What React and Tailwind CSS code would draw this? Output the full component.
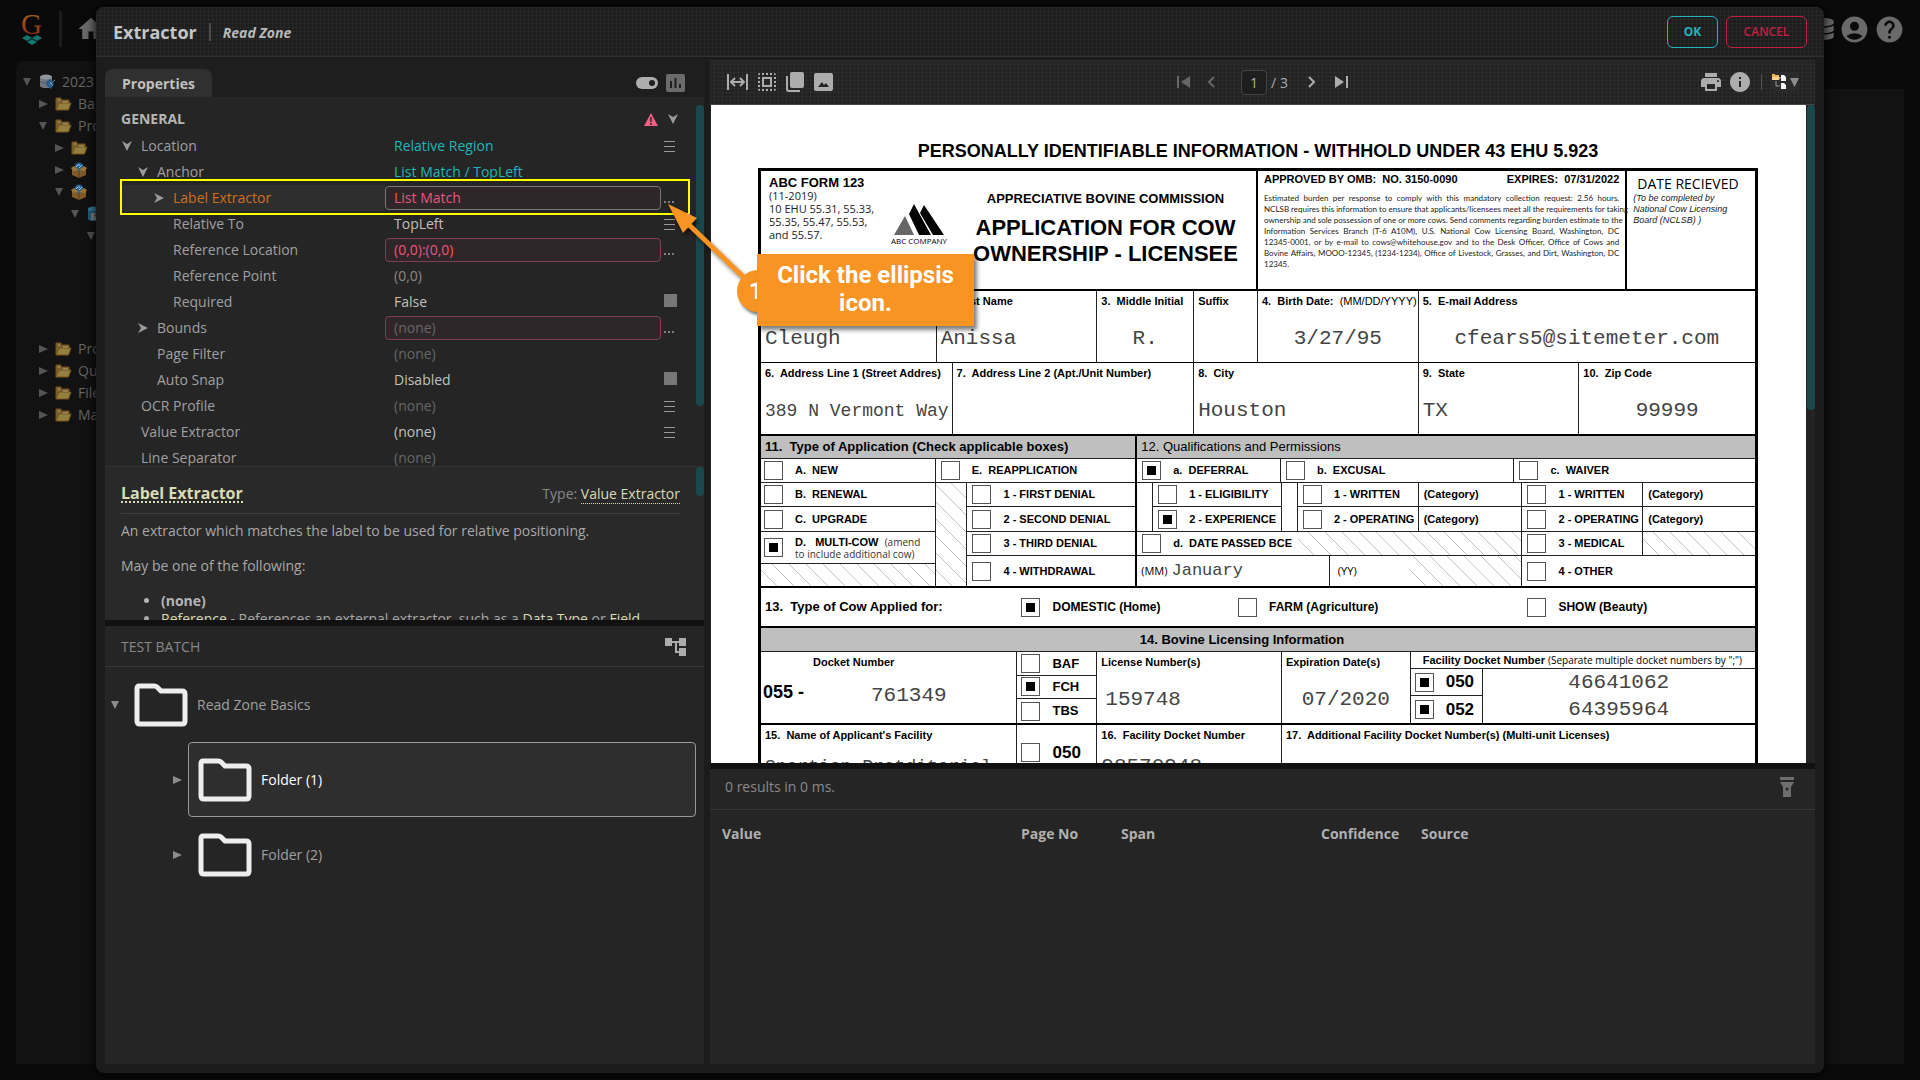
import { useState } from 'react';
import { MdAccountCircle, MdHelp, MdHome, MdPrint, MdInfo, MdSelectAll } from 'react-icons/md';
import { FaDatabase } from 'react-icons/fa';

const tree = [
  { name: '2023', pad: 'pl-[5px]', open: true, icon: 'repo' },
  { name: 'Ba', pad: 'pl-[21px]', open: false, icon: 'folder' },
  { name: 'Pro', pad: 'pl-[21px]', open: true, icon: 'folder' },
  { name: '', pad: 'pl-[37px]', open: false, icon: 'folder' },
  { name: '', pad: 'pl-[37px]', open: false, icon: 'box' },
  { name: '', pad: 'pl-[37px]', open: true, icon: 'box' },
  { name: '', pad: 'pl-[53px]', open: true, icon: 'model' },
  { name: '', pad: 'pl-[69px]', open: true, icon: null },
];

const treeBottom = [
  { name: 'Pro', pad: 'pl-[21px]', open: false, icon: 'folder' },
  { name: 'Qu', pad: 'pl-[21px]', open: false, icon: 'folder' },
  { name: 'File', pad: 'pl-[21px]', open: false, icon: 'folder' },
  { name: 'Ma', pad: 'pl-[21px]', open: false, icon: 'folder' },
];

const properties = [
  { label: 'Location', value: 'Relative Region', pad: 'pl-0', arrow: 'down', color: 'text-[#1fb5bb]', action: 'menu' },
  { label: 'Anchor', value: 'List Match / TopLeft', pad: 'pl-4', arrow: 'down', color: 'text-[#1fb5bb]' },
  { label: 'Label Extractor', value: 'List Match', pad: 'pl-8', arrow: 'right', box: true, selected: true, color: 'text-[#e8577e]', action: 'more' },
  { label: 'Relative To', value: 'TopLeft', pad: 'pl-8', color: 'text-[#c0c0c0]', action: 'menu' },
  { label: 'Reference Location', value: '(0,0):(0,0)', pad: 'pl-8', box: true, color: 'text-[#e8577e]', action: 'more' },
  { label: 'Reference Point', value: '(0,0)', pad: 'pl-8', color: 'text-[#8a8a8a]' },
  { label: 'Required', value: 'False', pad: 'pl-8', color: 'text-[#c0c0c0]', action: 'check' },
  { label: 'Bounds', value: '(none)', pad: 'pl-4', arrow: 'right', box: true, color: 'text-[#666]', action: 'more' },
  { label: 'Page Filter', value: '(none)', pad: 'pl-4', color: 'text-[#666]' },
  { label: 'Auto Snap', value: 'Disabled', pad: 'pl-4', color: 'text-[#c0c0c0]', action: 'check' },
  { label: 'OCR Profile', value: '(none)', pad: 'pl-0', color: 'text-[#666]', action: 'menu' },
  { label: 'Value Extractor', value: '(none)', pad: 'pl-0', color: 'text-[#c0c0c0]', action: 'menu' },
  { label: 'Line Separator', value: '(none)', pad: 'pl-0', color: 'text-[#666]' },
];

const mesh =
  'bg-[linear-gradient(to_right,rgba(255,255,255,0.03)_1px,transparent_1px),linear-gradient(to_bottom,rgba(255,255,255,0.03)_1px,transparent_1px)] bg-[size:4px_4px]';

const Dart = ({ dir }) => (
  <svg width="10" height="10" viewBox="0 0 10 10" className={dir === 'down' ? 'rotate-90' : ''}>
    <path d="M0 0 L10 5 L0 10 L3 5 Z" fill="#9a9a9a" />
  </svg>
);

const Triangle = ({ open, color = '#8c8c8c' }) => (
  <svg width="10" height="10" viewBox="0 0 10 10" className="shrink-0">
    <path d={open ? 'M1 1 H9 L5 9 Z' : 'M1 1 V9 L10 5 Z'} fill={color} />
  </svg>
);

const TreeIcon = ({ name }) => {
  if (name === 'folder') {
    return (
      <svg width="17" height="14" viewBox="0 0 17 14" className="shrink-0">
        <path d="M1 13 V1 H6 V3 H14 V6" fill="#7a6233" stroke="#76511f" />
        <path d="M1 13 L4 6 H16 L13.5 13 Z" fill="#93803f" stroke="#76511f" />
        <path d="M3 3 H5 M8 5 H13" stroke="#b0a36e" />
      </svg>
    );
  }
  if (name === 'box') {
    return (
      <svg width="16" height="16" viewBox="0 0 16 16" className="shrink-0">
        <circle cx="8" cy="5" r="4.5" fill="#23618c" />
        <path d="M5 5 L7 3 M8 6 L11 3 M8 2 V4" stroke="#a9c4d6" />
        <path d="M1 7 L8 9 L15 7 V13 L8 16 L1 13 Z" fill="#80592a" />
        <path d="M0 6 L3 4 L8 8 L13 4 L16 6 L14 9 L8 8 L2 9 Z" fill="#9a7439" />
        <path d="M8 9 V16" stroke="#5b3e19" />
      </svg>
    );
  }
  if (name === 'repo') {
    return (
      <svg width="17" height="16" viewBox="0 0 17 16" className="shrink-0">
        <path d="M1 3 V12 A6 2 0 0 0 13 12 V3 Z" fill="#70767b" />
        <ellipse cx="7" cy="3" rx="6" ry="2.5" fill="#8f979d" />
        <path d="M1 7 A6 2 0 0 0 13 7" fill="none" stroke="#53595d" />
        <path d="M7 8 L11 5 L15 10 L12 15 L8 12 Z" fill="#245b8a" />
        <path d="M10 11 L16 6 M11 8 L14 12" stroke="#6f93b0" />
      </svg>
    );
  }
  return (
    <svg width="16" height="16" viewBox="0 0 16 16" className="shrink-0">
      <path d="M1 3 V13 A6 2 0 0 0 13 13 V3 Z" fill="#255d7d" />
      <ellipse cx="7" cy="3" rx="6" ry="2.5" fill="#397b9c" />
      <path d="M4 7 H14 V14 H4 Z" fill="#7c8a92" />
      <path d="M8 10 L12 6" stroke="#8b2a2a" strokeWidth="2" />
    </svg>
  );
};

const TreeRow = ({ item }) => (
  <div className={`flex h-[22px] items-center gap-[6px] whitespace-nowrap text-sm ${item.pad}`}>
    <span className="flex w-3 justify-center"><Triangle open={item.open} color="#555" /></span>
    {item.icon && <TreeIcon name={item.icon} />}
    <span>{item.name}</span>
  </div>
);

const FolderIcon = () => (
  <svg width="54" height="44" viewBox="0 0 54 44" className="shrink-0">
    <path
      d="M5 3 H20 Q22 3 23 4 L27 8 H48 Q51 8 51 11 V38 Q51 41 48 41 H6 Q3 41 3 38 V6 Q3 3 5 3 Z"
      fill="none"
      stroke="#eee"
      strokeWidth="5"
    />
  </svg>
);

const PropertyAction = ({ row }) => {
  if (row.action === 'menu') {
    return (
      <button aria-label={`${row.label} options`} className="flex flex-col gap-1">
        <span className="h-px w-[11px] bg-[#999]" />
        <span className="h-px w-[11px] bg-[#999]" />
        <span className="h-px w-[11px] bg-[#999]" />
      </button>
    );
  }
  if (row.action === 'more') {
    return (
      <button aria-label={`Edit ${row.label}`} className="flex gap-[2px] pt-2">
        <span className="size-[2px] bg-[#808080]" />
        <span className="size-[2px] bg-[#808080]" />
        <span className="size-[2px] bg-[#808080]" />
      </button>
    );
  }
  if (row.action === 'check') {
    return <input type="checkbox" aria-label={row.label} className="mb-1 size-[13px] appearance-none bg-[#777]" />;
  }
  return null;
};

const PropertyRow = ({ row }) => (
  <div className="flex h-[26px] items-center text-sm">
    <div className={`flex h-full w-[264px] items-center ${row.selected ? 'bg-[#2e2e2e]' : ''} ${row.pad}`}>
      <span className="flex w-5 justify-start pl-px">{row.arrow && <Dart dir={row.arrow} />}</span>
      <span className={row.selected ? 'text-[#cf701f]' : 'text-[#a0a0a0]'}>{row.label}</span>
    </div>
    {row.box ? (
      <input
        aria-label={row.label}
        defaultValue={row.value}
        className={`h-6 w-[276px] rounded border bg-[#2f2629] px-2 pb-[2px] outline-none ${row.selected ? 'border-[#777]' : 'border-[#833e53]'} ${row.color}`}
      />
    ) : (
      <span className={`w-[276px] px-[9px] ${row.color}`}>{row.value}</span>
    )}
    <span className="flex items-center pl-[3px]"><PropertyAction row={row} /></span>
  </div>
);

const Check = ({ label, checked, size = 'text-[11px]', className = '' }) => (
  <label className={`flex items-center gap-3 whitespace-pre font-bold ${size} ${className}`}>
    <input
      type="checkbox"
      defaultChecked={checked}
      className="size-[19px] shrink-0 appearance-none border border-[#555] checked:bg-black checked:shadow-[inset_0_0_0_4px_white]"
    />
    {label}
  </label>
);

const Field = ({ label, value, size = 'text-[21px]', gap = 'mt-4', valueClass = '' }) => (
  <div className="border-r border-[#222] px-1 pt-[2px] last:border-r-0">
    <p className="h-4 whitespace-pre text-[11px] leading-4 font-bold">{label}</p>
    <p className={`font-['Liberation_Mono',monospace] leading-7 whitespace-nowrap text-[#444] ${gap} ${size} ${valueClass}`}>{value}</p>
  </div>
);

const Hatch = ({ className = '' }) => (
  <div className={`bg-[repeating-linear-gradient(45deg,transparent_0_11px,#c4c4c4_11px_12px)] ${className}`} />
);

const FormDocument = () => (
  <div className="min-w-0 flex-1 overflow-hidden bg-white pr-12 pl-[47px] font-['Liberation_Sans',sans-serif] text-black">
    <h2 className="pt-[34px] text-center text-[18px] leading-6 font-bold">
      PERSONALLY IDENTIFIABLE INFORMATION - WITHHOLD UNDER 43 EHU 5.923
    </h2>
    <div className="mt-[5px] border-[3px] border-b-0 border-black">
      <div className="grid h-[120px] grid-cols-[498fr_370fr_128fr] border-b-2 border-black *:min-w-0">
        <div className="flex gap-2 border-r-2 border-black pt-[5px] pl-2">
          <div className="w-[118px] font-['Open_Sans',sans-serif] text-[11px] leading-[13px] whitespace-nowrap text-[#222]">
            <p className="font-['Liberation_Sans',sans-serif] text-[13px] leading-[14px] font-bold text-black">ABC FORM 123</p>
            <p className="leading-3">(11-2019)</p>
            <p>10 EHU 55.31, 55.33,</p>
            <p>55.35, 55.47, 55.53,</p>
            <p>and 55.57.</p>
          </div>
          <div className="flex w-12 flex-col items-center pt-7">
            <svg width="50" height="31" viewBox="0 0 50 31">
              <path d="M0 31 L11 12 L20 31 Z" fill="#666" />
              <path d="M15 10 L20 0 L37 31 H25 Z M26 9 L30 1 L50 31 H39 Z" fill="#000" />
            </svg>
            <p className="mt-px font-['Open_Sans',sans-serif] text-[8px] leading-[10px] whitespace-nowrap">ABC COMPANY</p>
          </div>
          <div className="flex-1 pt-[14px] pl-1 text-center font-bold whitespace-nowrap">
            <p className="text-[13px] leading-[18px]">APPRECIATIVE BOVINE COMMISSION</p>
            <p className="mt-[7px] text-[22px] leading-[26px]">APPLICATION FOR COW<br />OWNERSHIP - LICENSEE</p>
          </div>
        </div>
        <div className="border-r-2 border-black px-[6px] pt-[2px]">
          <div className="flex justify-between text-[11px] leading-[13px] font-bold whitespace-pre">
            <span>APPROVED BY OMB:  NO. 3150-0090</span>
            <span>EXPIRES:  07/31/2022</span>
          </div>
          <div className="mt-[7px] font-['Lato',sans-serif] text-[8px] leading-[11px] whitespace-nowrap text-[#222] [&>p]:[text-align-last:justify]">
            <p>Estimated burden per response to comply with this mandatory collection request: 2.56 hours.</p>
            <p>NCLSB requires this information to ensure that applicants/licensees meet all the requirements for taking</p>
            <p>ownership and sole possession of one or more cows. Send comments regarding burden estimate to the</p>
            <p>Information Services Branch (T-6 A10M), U.S. National Cow Licensing Board, Washington, DC</p>
            <p>12345-0001, or by e-mail to cows@whitehouse.gov and to the Desk Officer, Office of Cows and</p>
            <p>Bovine Affairs, MOOO-12345, (1234-1234), Office of Livestock, Grasses, and Dirt, Washington, DC</p>
            <div>12345.</div>
          </div>
        </div>
        <div className="pt-1 pl-[6px] whitespace-nowrap">
          <p className="pl-1 font-['Open_Sans',sans-serif] text-[14px] leading-[18px]">DATE RECIEVED</p>
          <p className="text-[9px] leading-[11px] text-[#222] italic">(To be completed by<br />National Cow Licensing<br />Board (NCLSB) )</p>
        </div>
      </div>

      <div className="grid h-[72px] grid-cols-[176fr_161fr_97fr_64fr_161fr_337fr] border-b border-black *:min-w-0">
        <Field label="1.  Last Name" value="Cleugh" />
        <Field label="2.  First Name" value="Anissa" />
        <Field label="3.  Middle Initial" value="R." valueClass="text-center" />
        <Field label="Suffix" value="" />
        <Field label={<>4.  Birth Date:  <span className="font-normal">(MM/DD/YYYY)</span></>} value="3/27/95" valueClass="text-center" />
        <Field label="5.  E-mail Address" value="cfears5@sitemeter.com" valueClass="text-center" />
      </div>
      <div className="grid h-[73px] grid-cols-[192fr_242fr_225fr_161fr_176fr] border-b-2 border-black *:min-w-0">
        <Field label="6.  Address Line 1 (Street Addres)" value="389 N Vermont Way" size="text-[18px]" />
        <Field label="7.  Address Line 2 (Apt./Unit Number)" value="" />
        <Field label="8.  City" value="Houston" />
        <Field label="9.  State" value="TX" />
        <Field label="10.  Zip Code" value="99999" valueClass="text-center" />
      </div>

      <div className="grid h-[152px] grid-cols-[377fr_619fr] border-b-2 border-black *:min-w-0">
        <div className="flex flex-col border-r-2 border-black">
          <h3 className="h-[23px] border-b border-[#222] bg-[#bfbfbf] pl-1 text-[13px] leading-[22px] font-bold whitespace-pre">11.  Type of Application (Check applicable boxes)</h3>
          <div className="grid h-6 grid-cols-[176fr_201fr] border-b border-[#222] *:min-w-0">
            <Check label="A.  NEW" className="border-r border-[#222] pl-[3px]" />
            <Check label="E.  REAPPLICATION" className="pl-[5px]" />
          </div>
          <div className="grid flex-1 grid-cols-[176fr_32fr_169fr] *:min-w-0">
            <div className="flex flex-col border-r border-[#222]">
              <Check label="B.  RENEWAL" className="h-6 border-b border-[#222] pl-[3px]" />
              <Check label="C.  UPGRADE" className="h-[25px] border-b border-[#222] pl-[3px]" />
              <Check
                label={<span className="leading-3">D.   MULTI-COW  <span className="font-['Open_Sans',sans-serif] text-[10px] font-normal text-[#333]">(amend<br />to include additional cow)</span></span>}
                checked
                className="h-8 border-b border-[#222] pl-[3px]"
              />
              <Hatch className="flex-1" />
            </div>
            <Hatch className="border-r border-[#222]" />
            <div className="flex flex-col">
              <Check label="1 - FIRST DENIAL" className="h-6 border-b border-[#222] pl-[5px]" />
              <Check label="2 - SECOND DENIAL" className="h-[25px] border-b border-[#222] pl-[5px]" />
              <Check label="3 - THIRD DENIAL" className="h-6 border-b border-[#222] pl-[5px]" />
              <Check label="4 - WITHDRAWAL" className="flex-1 pl-[5px]" />
            </div>
          </div>
        </div>
        <div className="flex flex-col">
          <h3 className="h-[23px] border-b border-[#222] bg-[#bfbfbf] pl-1 text-[13px] leading-[22px] whitespace-pre">12. Qualifications and Permissions</h3>
          <div className="grid h-6 grid-cols-[144fr_234fr_241fr] border-b border-[#222] *:min-w-0">
            <Check label="a.  DEFERRAL" checked className="border-r border-[#222] pl-[5px]" />
            <Check label="b.  EXCUSAL" className="border-r border-[#222] pl-[5px]" />
            <Check label="c.  WAIVER" className="pl-[5px]" />
          </div>
          <div className="grid h-[49px] grid-cols-[16fr_129fr_16fr_121fr_104fr_121fr_112fr] border-b border-[#222] text-[11px] font-bold *:min-w-0">
            <div className="border-r border-[#222]" />
            <div className="grid grid-rows-2 border-r border-[#222]">
              <Check label="1 - ELIGIBILITY" className="border-b border-[#222] pl-[5px]" />
              <Check label="2 - EXPERIENCE" checked className="pl-[5px]" />
            </div>
            <div className="border-r border-[#222]" />
            <div className="grid grid-rows-2 border-r border-[#222]">
              <Check label="1 - WRITTEN" className="border-b border-[#222] pl-[5px]" />
              <Check label="2 - OPERATING" className="pl-[5px]" />
            </div>
            <div className="grid grid-rows-2 border-r border-[#222]">
              <p className="flex items-center border-b border-[#222] pl-[5px]">(Category)</p>
              <p className="flex items-center pl-[5px]">(Category)</p>
            </div>
            <div className="grid grid-rows-2 border-r border-[#222]">
              <Check label="1 - WRITTEN" className="border-b border-[#222] pl-[5px]" />
              <Check label="2 - OPERATING" className="pl-[5px]" />
            </div>
            <div className="grid grid-rows-2">
              <p className="flex items-center border-b border-[#222] pl-[5px]">(Category)</p>
              <p className="flex items-center pl-[5px]">(Category)</p>
            </div>
          </div>
          <div className="grid h-6 grid-cols-[161fr_225fr_121fr_112fr] border-b border-[#222] *:min-w-0">
            <Check label="d.  DATE PASSED BCE" className="pl-[5px]" />
            <Hatch className="border-r border-[#222]" />
            <Check label="3 - MEDICAL" className="border-r border-[#222] pl-[5px]" />
            <Hatch />
          </div>
          <div className="grid flex-1 grid-cols-[193fr_80fr_113fr_233fr] font-['Open_Sans',sans-serif] text-[11px] *:min-w-0">
            <p className="flex items-center gap-1 border-r border-[#222] pl-1">
              (MM) <span className="font-['Liberation_Mono',monospace] text-[17px] text-[#444]">January</span>
            </p>
            <p className="flex items-center pl-2">(YY)</p>
            <Hatch className="border-r border-[#222]" />
            <Check label="4 - OTHER" className="pl-[5px] font-['Liberation_Sans',sans-serif]" />
          </div>
        </div>
      </div>

      <div className="grid h-[40px] grid-cols-[261fr_217fr_290fr_228fr] items-center border-b-2 border-black *:min-w-0">
        <p className="pl-1 text-[13px] font-bold whitespace-pre">13.  Type of Cow Applied for:</p>
        <Check label="DOMESTIC (Home)" checked size="text-xs" />
        <Check label="FARM (Agriculture)" size="text-xs" />
        <Check label="SHOW (Beauty)" size="text-xs" />
      </div>
      <h3 className="h-6 border-b border-[#222] bg-[#bfbfbf] pr-8 text-center text-[13px] leading-6 font-bold">14. Bovine Licensing Information</h3>

      <div className="grid h-[73px] grid-cols-[257fr_80fr_185fr_129fr_345fr] border-b-2 border-black *:min-w-0">
        <div className="border-r border-[#222] pt-[2px] pl-[2px]">
          <p className="pl-[50px] text-[11px] leading-4 font-bold">Docket Number</p>
          <p className="flex items-start pt-2 text-[18px] leading-7 font-bold">
            <span className="w-[108px]">055 -</span>
            <span className="pt-1 font-['Liberation_Mono',monospace] text-[21px] font-normal text-[#444]">761349</span>
          </p>
        </div>
        <div className="grid grid-rows-3 border-r border-[#222]">
          <Check label="BAF" size="text-[13px]" className="border-b border-[#222] pl-1" />
          <Check label="FCH" checked size="text-[13px]" className="border-b border-[#222] pl-1" />
          <Check label="TBS" size="text-[13px]" className="pl-1" />
        </div>
        <Field label="License Number(s)" value="159748" valueClass="pl-1" />
        <Field label="Expiration Date(s)" value="07/2020" valueClass="text-center" />
        <div className="flex flex-col">
          <p className="h-[17px] border-b border-[#222] pl-3 text-[11px] leading-4 font-bold whitespace-nowrap">
            Facility Docket Number <span className="font-['Open_Sans',sans-serif] text-[10px] font-normal">(Separate multiple docket numbers by ";")</span>
          </p>
          <div className="grid flex-1 grid-cols-[72fr_273fr] *:min-w-0">
            <div className="grid grid-rows-2 border-r border-[#222]">
              <Check label="050" checked size="text-[17px]" className="border-b border-[#222] pl-1" />
              <Check label="052" checked size="text-[17px]" className="pl-1" />
            </div>
            <div className="grid grid-rows-2 items-center text-center font-['Liberation_Mono',monospace] text-[21px] leading-6 text-[#444]">
              <p>46641062</p>
              <p>64395964</p>
            </div>
          </div>
        </div>
      </div>
      <div className="grid h-[73px] grid-cols-[257fr_80fr_185fr_474fr] *:min-w-0">
        <Field label="15.  Name of Applicant's Facility" value="Snortion Pratditorial" size="text-[18px]" gap="mt-[10px]" />
        <Check label="050" size="text-[17px]" className="border-r border-[#222] pb-[18px] pl-1" />
        <Field label="16.  Facility Docket Number" value="98570948" gap="mt-[10px]" />
        <Field label="17.  Additional Facility Docket Number(s) (Multi-unit Licenses)" value="" />
      </div>
    </div>
  </div>
);

const ViewerToolbar = () => {
  const [page, setPage] = useState('1');
  return (
    <div className={`flex h-[45px] shrink-0 items-center border-b border-[#444] bg-[#232323] ${mesh}`}>
      <div className="flex flex-1 items-center gap-[7px] pl-[17px] text-[#adadad]">
        <button aria-label="Fit width">
          <svg width="21" height="18" viewBox="0 0 21 18" fill="none" stroke="currentColor" strokeWidth="2">
            <path d="M1 1 V17 M20 1 V17 M4 9 H17 M8 5 L4 9 L8 13 M13 5 L17 9 L13 13" />
          </svg>
        </button>
        <button aria-label="Select region"><MdSelectAll size={24} /></button>
        <button aria-label="Copy page">
          <svg width="18" height="20" viewBox="0 0 18 20" fill="currentColor">
            <path d="M6 0 H16 Q18 0 18 2 V14 Q18 16 16 16 H6 Q4 16 4 14 V2 Q4 0 6 0 Z" />
            <path d="M1 4 V17 Q1 19 3 19 H14" fill="none" stroke="currentColor" strokeWidth="2" />
          </svg>
        </button>
        <button aria-label="Image" className="pl-[3px]">
          <svg width="19" height="18" viewBox="0 0 19 18">
            <rect width="19" height="18" rx="2" fill="currentColor" />
            <path d="M4 14 L8 9 L10 12 L12 10 L15 14 Z" fill="#232323" />
          </svg>
        </button>
      </div>
      <div className="flex items-center gap-4 text-[14px] text-[#adadad]">
        <button aria-label="First page" className="text-[#666]">
          <svg width="14" height="12" viewBox="0 0 14 12" fill="currentColor"><path d="M0 0 H2 V12 H0 Z M13 0 V12 L4 6 Z" /></svg>
        </button>
        <button aria-label="Previous page" className="text-[#666]">
          <svg width="8" height="12" viewBox="0 0 8 12" fill="none" stroke="currentColor" strokeWidth="2"><path d="M7 1 L2 6 L7 11" /></svg>
        </button>
        <label className="flex items-center gap-1 pl-[10px]">
          <input
            aria-label="Page"
            value={page}
            onChange={(e) => setPage(e.target.value)}
            className="h-[25px] w-[26px] rounded border border-[#444] bg-[#1e1e1e] text-center outline-none"
          />
          / 3
        </label>
        <button aria-label="Next page" className="pl-1">
          <svg width="8" height="12" viewBox="0 0 8 12" fill="none" stroke="currentColor" strokeWidth="2"><path d="M1 1 L6 6 L1 11" /></svg>
        </button>
        <button aria-label="Last page" className="pl-[3px]">
          <svg width="14" height="12" viewBox="0 0 14 12" fill="currentColor"><path d="M11 0 H13 V12 H11 Z M0 0 V12 L9 6 Z" /></svg>
        </button>
      </div>
      <div className="flex flex-1 items-center justify-end gap-[5px] pr-4 text-[#adadad]">
        <button aria-label="Print"><MdPrint size={24} /></button>
        <button aria-label="Information"><MdInfo size={24} /></button>
        <span className="mx-1 h-4 w-px bg-[#555]" />
        <button aria-label="Layers" className="flex items-center gap-[2px] rounded bg-[#2b2b2b]">
          <svg width="17" height="18" viewBox="0 0 17 18">
            <path d="M1 1 H4 V2 H8 V7 H1 Z" fill="#f0b54e" />
            <path d="M2 4 H9 L8 7 H1 Z" fill="#f7d797" />
            <path d="M5 8 V13 H9 M9 5 H10" stroke="#999" fill="none" />
            <path d="M10 2 H13 L15 4 V8 H10 Z M10 10 H13 L15 12 V16 H10 Z" fill="#f4f4f4" />
          </svg>
          <svg width="9" height="9" viewBox="0 0 9 9"><path d="M0 0 H9 L4.5 9 Z" fill="#8c8c8c" /></svg>
        </button>
      </div>
    </div>
  );
};

const PropertiesPanel = () => (
  <section className="flex h-[560px] shrink-0 flex-col bg-[#252525]">
    <div className="flex h-[37px] shrink-0 items-end justify-between bg-[#1e1e1e] pr-[19px]">
      <button className="h-7 rounded-t-lg bg-[#303030] px-[17px] pt-px text-sm font-bold text-[#c0c0c0]">Properties</button>
      <div className="flex items-center gap-2 pb-[5px]">
        <button aria-label="Toggle view">
          <svg width="22" height="12" viewBox="0 0 22 12">
            <rect width="22" height="12" rx="6" fill="#adadad" />
            <circle cx="16" cy="6" r="3" fill="#1e1e1e" />
          </svg>
        </button>
        <button aria-label="Statistics">
          <svg width="19" height="18" viewBox="0 0 19 18">
            <rect width="19" height="18" rx="2" fill="#6b6b6b" />
            <path d="M5 7 V14 M9.5 4 V14 M14 10 V14" stroke="#1e1e1e" strokeWidth="2" />
          </svg>
        </button>
      </div>
    </div>

    <div className="flex h-[370px] shrink-0 overflow-hidden border-b border-[#333] pt-2">
      <div className="flex-1 pl-4">
        <div className="flex h-7 items-center justify-between pr-[18px] text-sm font-bold text-[#b5b5b5]">
          GENERAL
          <span className="flex items-center gap-[10px]">
            <svg width="14" height="13" viewBox="0 0 14 13">
              <path d="M7 0 L14 13 H0 Z" fill="#ef5f85" />
              <path d="M7 4 V9 M7 10 V12" stroke="#252525" strokeWidth="1.5" />
            </svg>
            <Dart dir="down" />
          </span>
        </div>
        {properties.map((row) => (
          <PropertyRow key={row.label} row={row} />
        ))}
      </div>
      <div className="h-[301px] w-2 rounded bg-[#1a484c]" />
    </div>

    <div className="flex min-h-0 flex-1 overflow-hidden bg-[#292929] text-sm text-[#a8a8a8]">
      <div className="flex-1 pr-4 pl-4">
        <div className="flex h-[47px] items-center justify-between border-b border-[#3d3d3d] pt-2">
          <h2 className="border-b-2 border-dotted border-[#d9dbb6] text-base leading-4 font-bold text-[#d9dbb6]">Label Extractor</h2>
          <p className="leading-4 text-[#888]">
            Type: <a href="#value-extractor" className="border-b border-dotted border-[#d9dbb6] text-[#d9dbb6]">Value Extractor</a>
          </p>
        </div>
        <p className="mt-[7px] leading-5">An extractor which matches the label to be used for relative positioning.</p>
        <p className="mt-[15px] leading-5">May be one of the following:</p>
        <ul className="mt-4 list-disc pl-10 leading-[18px]">
          <li className="font-bold text-[#b5b5b5]">(none)</li>
          <li className="whitespace-nowrap">
            <a href="#reference" className="text-[#d9dbb6]">Reference</a> - References an external extractor, such as a{' '}
            <a href="#data-type" className="text-[#d9dbb6]">Data Type</a> or <a href="#field" className="text-[#d9dbb6]">Field</a>
          </li>
        </ul>
      </div>
      <div className="h-[29px] w-2 rounded bg-[#1a484c]" />
    </div>
  </section>
);

const BatchPanel = () => (
  <section className="flex-1 bg-[#252525] text-sm text-[#a0a0a0]">
    <div className="flex h-[41px] items-center justify-between border-b border-[#383838] pt-px pr-[18px] pl-4">
      <h2 className="text-[#888]">TEST BATCH</h2>
      <button aria-label="Batch tree">
        <svg width="21" height="18" viewBox="0 0 21 18" fill="#adadad">
          <path d="M0 0 H7 V3 H14 V0 H21 V8 H14 V5 H12 V13 H14 V10 H21 V18 H14 V15 H10 V5 H7 V8 H0 Z" />
        </svg>
      </button>
    </div>
    <div className="flex h-[75px] items-center gap-[9px] pl-[5px]">
      <Triangle open />
      <span className="ml-[5px] flex items-center gap-[9px]"><FolderIcon />Read Zone Basics</span>
    </div>
    <ul className="pr-2 pl-[67px]">
      <li className="flex items-center gap-[6px]">
        <Triangle />
        <div className="flex h-[75px] flex-1 items-center gap-[9px] rounded border border-[#999] bg-[#2e2e2e] pl-[9px] font-medium text-white">
          <FolderIcon />Folder (1)
        </div>
      </li>
      <li className="flex items-center gap-[6px]">
        <Triangle />
        <div className="flex h-[75px] flex-1 items-center gap-[9px] pl-[10px]"><FolderIcon />Folder (2)</div>
      </li>
    </ul>
  </section>
);

const ResultsPanel = () => (
  <section className="flex-1 bg-[#252525] text-sm text-[#b0b0b0]">
    <div className="flex h-[41px] items-center justify-between border-b border-[#383838] pr-[21px] pb-1 pl-[15px] text-[#8a8a8a]">
      0 results in 0 ms.
      <button aria-label="Highlight">
        <svg width="14" height="20" viewBox="0 0 14 20">
          <path d="M0 0 H14 V3 H0 Z M0 5 H14 L11 10 V20 H3 V10 Z" fill="#6e6e6e" />
          <circle cx="7" cy="12" r="1.5" fill="#252525" />
        </svg>
      </button>
    </div>
    <table className="w-full table-fixed text-left">
      <thead>
        <tr className="h-12">
          <th className="w-[311px] pl-3">Value</th>
          <th className="w-[100px]">Page No</th>
          <th className="w-[200px]">Span</th>
          <th className="w-[100px]">Confidence</th>
          <th>Source</th>
        </tr>
      </thead>
    </table>
  </section>
);

// numbered callout pointing at the ellipsis button of the selected property
const Callout = () => (
  <>
    <div className="absolute top-[179px] left-[120px] h-9 w-[570px] border-2 border-[#ffff00]" />
    <svg width="120" height="110" viewBox="0 0 120 110" className="absolute top-[200px] left-[660px] drop-shadow-[2px_3px_2px_rgba(0,0,0,0.5)]">
      <path d="M24 20 L98 91" stroke="#f79423" strokeWidth="5" />
      <path d="M8 4 L37 18 L23 33 Z" fill="#f79423" />
    </svg>
    <div className="absolute top-[270px] left-[737px] flex size-[42px] items-center rounded-full bg-[#f79423] pl-3 font-['Roboto',sans-serif] text-2xl font-bold text-white shadow-[2px_3px_3px_rgba(0,0,0,0.5)]">
      1
    </div>
    <div className="absolute top-[254px] left-[757px] w-[217px] bg-[#f79423] px-4 pt-[7px] pb-[9px] text-center font-['Roboto',sans-serif] text-2xl leading-7 font-bold text-white shadow-[3px_4px_4px_rgba(0,0,0,0.5)]">
      Click the ellipsis icon.
    </div>
  </>
);

const App = () => (
  <div className="relative flex h-screen flex-col overflow-hidden bg-[#0a0a0a] font-['Open_Sans',sans-serif] text-[#666]">
    <header className="flex h-[61px] shrink-0 items-center justify-between pr-[15px] pb-[3px] pl-[21px]">
      <div className="flex items-center">
        <svg width="22" height="32" viewBox="0 0 22 32">
          <defs>
            <linearGradient id="logo" x1="0" y1="0" x2="0" y2="1">
              <stop offset="0" stopColor="#a3701a" />
              <stop offset="1" stopColor="#8e1c1c" />
            </linearGradient>
          </defs>
          <text x="0" y="21" fontSize="29" fontFamily="Liberation Serif, serif" fill="url(#logo)">G</text>
          <path d="M1 25 L6 22 L11 25 L6 28 Z M11 25 L16 22 L21 25 L16 28 Z M6 29 L11 26 L16 29 L11 32 Z" fill="#11766f" />
        </svg>
        <span className="ml-4 h-9 w-[3px] bg-[#1c1c1c]" />
        <MdHome size={30} className="ml-[14px] text-[#6a6a6a]" />
      </div>
      <div className="flex items-center gap-1 text-[#6a6a6a]">
        <FaDatabase size={22} />
        <MdAccountCircle size={31} />
        <MdHelp size={31} />
      </div>
    </header>
    <div className="flex flex-1 justify-between px-4 pb-4">
      <nav className="w-[320px] overflow-hidden rounded-tl-lg bg-[#121212] pt-[10px]">
        {tree.map((item, i) => <TreeRow key={i} item={item} />)}
        <div className="h-[91px]" />
        {treeBottom.map((item, i) => <TreeRow key={i} item={item} />)}
      </nav>
      <div className="mt-7 w-[320px] bg-[#121212]" />
    </div>

    <div role="dialog" aria-label="Extractor" className="absolute inset-x-24 inset-y-[7px] flex flex-col overflow-hidden rounded-lg bg-[#1c1c1c] shadow-[0_0_12px_#000]">
      <header className={`flex h-[50px] shrink-0 items-center justify-between border-b border-[#303030] bg-[#1e1e1e] pr-[17px] pl-[17px] ${mesh}`}>
        <h1 className="flex items-center gap-3 text-lg font-bold text-[#c4c4c4]">
          Extractor
          <span className="h-[18px] w-[2px] bg-[#4a4a4a]" />
          <span className="pt-[2px] text-[14px] font-bold text-[#b8b8b8] italic">Read Zone</span>
        </h1>
        <div className="flex gap-2">
          <button className="h-8 w-[51px] rounded-md border border-[#20b4bd] text-xs font-bold text-[#20b4bd]">OK</button>
          <button className="h-8 w-[81px] rounded-md border border-[#c21f43] text-xs font-semibold text-[#c21f43]">CANCEL</button>
        </div>
      </header>
      <div className="flex min-h-0 flex-1 gap-[6px] pt-[3px] pr-[9px] pb-[9px] pl-[9px]">
        <div className="flex w-[599px] shrink-0 flex-col gap-[6px] bg-[#111]">
          <PropertiesPanel />
          <BatchPanel />
        </div>
        <div className="flex min-w-0 flex-1 flex-col gap-[6px] bg-[#111]">
          <div className="flex h-[703px] shrink-0 flex-col overflow-hidden bg-[#232323]">
            <ViewerToolbar />
            <div className="flex min-h-0 flex-1 pl-px">
              <FormDocument />
              <div className="ml-px h-[305px] w-2 rounded bg-[#1a484c]" />
            </div>
          </div>
          <ResultsPanel />
        </div>
      </div>
    </div>
    <Callout />
  </div>
);

export default App;
